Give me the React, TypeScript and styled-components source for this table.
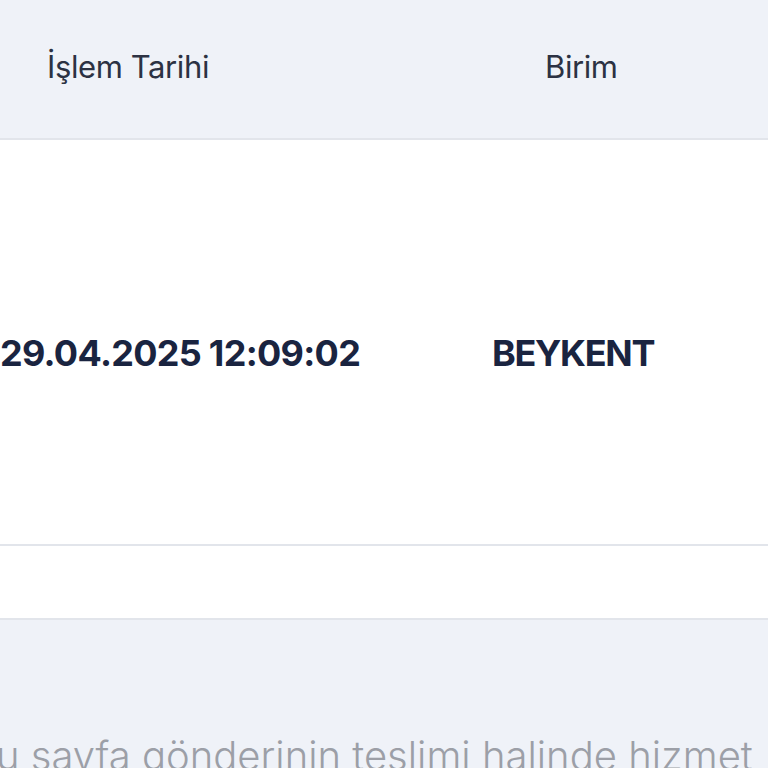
import React from "react";
import styled, { createGlobalStyle } from "styled-components";

const GlobalStyle = createGlobalStyle`
  html, body {
    margin: 0;
    padding: 0;
    background: #eff2f8;
    overflow: hidden;
  }
  body {
    font-family: "Inter", "Noto Sans", sans-serif;
  }
`;

const Page = styled.div`
  width: 768px;
  height: 768px;
  overflow: hidden;
  display: flex;
  flex-direction: column;
  background: #eff2f8;
`;

const Row = styled.div<{ height: number; bg: string }>`
  display: grid;
  grid-template-columns: 400px 1fr;
  align-items: center;
  height: ${({ height }) => height}px;
  background: ${({ bg }) => bg};
  border-bottom: 2px solid #e2e5eb;
  flex-shrink: 0;
`;

const HeadCell = styled.div<{ pad?: string }>`
  font-size: 31px;
  font-weight: 400;
  color: #2c3243;
  letter-spacing: -0.4px;
  padding: ${({ pad }) => pad || "0"};
  padding-bottom: 6px;
  white-space: nowrap;
`;

const DataCell = styled.div<{ pad?: string; spacing?: number }>`
  font-size: 36px;
  font-weight: 700;
  color: #1a2440;
  letter-spacing: ${({ spacing }) => spacing ?? -0.7}px;
  padding: ${({ pad }) => pad || "0"};
  padding-top: 22px;
  white-space: nowrap;
`;

const Footer = styled.div`
  flex: 1;
  background: #eff2f8;
  overflow: hidden;
`;

const Notice = styled.p`
  margin: 0;
  padding-top: 111px;
  text-indent: -30px;
  font-size: 40px;
  font-weight: 300;
  letter-spacing: 0;
  color: #9c9fa7;
  white-space: nowrap;
`;

export default function App() {
  return (
    <>
      <GlobalStyle />
      <Page>
        <Row height={138} bg="#eff2f8">
          <HeadCell pad="0 0 0 47px">İşlem Tarihi</HeadCell>
          <HeadCell pad="0 0 0 145px">Birim</HeadCell>
        </Row>
        <Row height={404} bg="#ffffff">
          <DataCell>29.04.2025 12:09:02</DataCell>
          <DataCell pad="0 0 0 92px" spacing={-1.3}>BEYKENT</DataCell>
        </Row>
        <Row height={72} bg="#ffffff" />
        <Footer>
          <Notice>Bu sayfa gönderinin teslimi halinde hizmet</Notice>
        </Footer>
      </Page>
    </>
  );
}
